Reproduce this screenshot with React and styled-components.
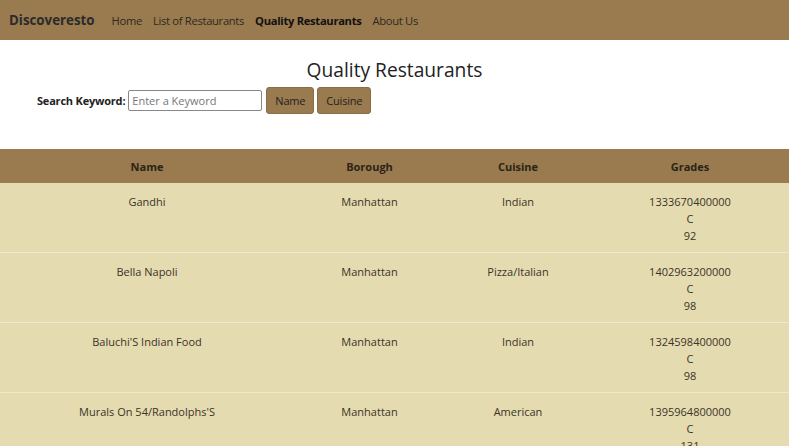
import React from 'react'
import styled, { createGlobalStyle } from 'styled-components'

const Global = createGlobalStyle`
    html, body { margin: 0; padding: 0; background: #fff; overflow: hidden; }
    body { font-family: "Open Sans", "Noto Sans", sans-serif; color: #222; }
`;

const Page = styled.div`
    width: 789px;
`;

const Nav = styled.nav`
    height: 40px;
    background: #9a7a4f;
    display: flex;
    align-items: center;
    padding-left: 9px;
`;

const Brand = styled.div`
    font-size: 13.3px;
    font-weight: 700;
    color: #2b2b2b;
    margin-right: 17px;
`;

const NavLink = styled.a`
    font-size: 11.2px;
    color: ${p => (p.active ? '#111' : '#2e2a22')};
    font-weight: ${p => (p.active ? 700 : 400)};
    margin-right: 11px;
    text-decoration: none;
    letter-spacing: -0.3px;
`;

const Hero = styled.section`
    height: 109px;
    display: flex;
    flex-direction: column;
`;

const Title = styled.h1`
    margin: 18px 0 0;
    text-align: center;
    font-size: 19.2px;
    font-weight: 500;
    color: #222;
    line-height: 24px;
`;

const SearchRow = styled.div`
    display: flex;
    align-items: center;
    gap: 3px;
    padding-left: 37px;
    margin-top: 5px;
`;

const Label = styled.label`
    font-size: 11px;
    font-weight: 700;
    color: #222;
    letter-spacing: -0.2px;
`;

const Input = styled.input`
    width: 134px;
    height: 21px;
    box-sizing: border-box;
    border: 1px solid #888;
    border-radius: 2px;
    font-family: inherit;
    font-size: 11px;
    padding: 0 3px;
    margin-right: 1px;
    &::placeholder { color: #777; }
`;

const Button = styled.button`
    height: 27px;
    padding: 0 8px;
    background: #9a7a4f;
    border: 1px solid #8a6d46;
    border-radius: 3px;
    font-family: inherit;
    font-size: 11px;
    color: #222;
    letter-spacing: -0.2px;
`;

const Table = styled.table`
    width: 789px;
    border-collapse: collapse;
    table-layout: fixed;
    font-size: 11px;
`;

const Th = styled.th`
    background: #9a7a4f;
    height: 34px;
    padding: 0;
    font-weight: 700;
    color: #2a2418;
    width: ${p => p.w}px;
`;

const Tr = styled.tr`
    background: #e5dbb0;
    & td { border-bottom: 1px solid #eee8cc; }
`;

const Td = styled.td`
    text-align: center;
    vertical-align: top;
    padding: 10px 0 8px;
    line-height: 17px;
    color: #3a3428;
    height: 50px;
`;

const rows = [
    { name: 'Gandhi', borough: 'Manhattan', cuisine: 'Indian', grades: ['1333670400000', 'C', '92'] },
    { name: 'Bella Napoli', borough: 'Manhattan', cuisine: 'Pizza/Italian', grades: ['1402963200000', 'C', '98'] },
    { name: "Baluchi'S Indian Food", borough: 'Manhattan', cuisine: 'Indian', grades: ['1324598400000', 'C', '98'] },
    { name: "Murals On 54/Randolphs'S", borough: 'Manhattan', cuisine: 'American', grades: ['1395964800000', 'C', '131'] },
];

export default function App() {
    return (
        <Page>
            <Global />
            <Nav>
                <Brand>Discoveresto</Brand>
                <NavLink>Home</NavLink>
                <NavLink>List of Restaurants</NavLink>
                <NavLink active>Quality Restaurants</NavLink>
                <NavLink>About Us</NavLink>
            </Nav>
            <Hero>
                <Title>Quality Restaurants</Title>
                <SearchRow>
                    <Label>Search Keyword:</Label>
                    <Input placeholder="Enter a Keyword" />
                    <Button>Name</Button>
                    <Button>Cuisine</Button>
                </SearchRow>
            </Hero>
            <Table>
                <thead>
                    <tr>
                        <Th w={294}>Name</Th>
                        <Th w={151}>Borough</Th>
                        <Th w={146}>Cuisine</Th>
                        <Th w={198}>Grades</Th>
                    </tr>
                </thead>
                <tbody>
                    {rows.map(r => (
                        <Tr key={r.name}>
                            <Td>{r.name}</Td>
                            <Td>{r.borough}</Td>
                            <Td>{r.cuisine}</Td>
                            <Td>{r.grades.map(g => <div key={g}>{g}</div>)}</Td>
                        </Tr>
                    ))}
                </tbody>
            </Table>
        </Page>
    );
}
